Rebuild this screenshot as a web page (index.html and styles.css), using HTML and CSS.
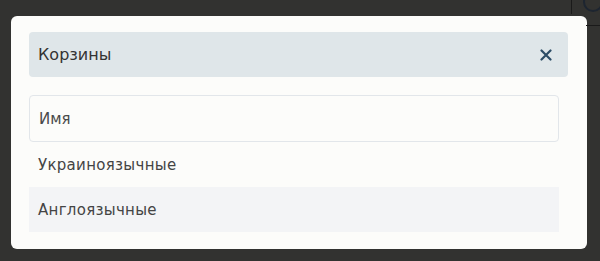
FILE: index.html
```html
<!DOCTYPE html>
<html lang="ru">
<head>
<meta charset="utf-8">
<link rel="stylesheet" href="styles.css">
</head>
<body>
<div class="backdrop-deco">
  <span class="deco-vline"></span>
  <span class="deco-ring"></span>
  <span class="deco-hline"></span>
</div>
<div class="modal">
  <div class="modal-header">
    <span class="modal-title">Корзины</span>
    <button class="close-btn" aria-label="Закрыть">
      <svg width="12" height="12" viewBox="0 0 12 12"><path d="M1.5 1.5 L10.5 10.5 M10.5 1.5 L1.5 10.5" stroke="#2c4c66" stroke-width="2.2" stroke-linecap="round"/></svg>
    </button>
  </div>
  <div class="modal-body">
    <div class="search-input">Имя</div>
    <ul class="list">
      <li class="list-item">Украиноязычные</li>
      <li class="list-item alt">Англоязычные</li>
    </ul>
  </div>
</div>
</body>
</html>
```
FILE: styles.css
```css
html, body {
  margin: 0;
  padding: 0;
}
body {
  width: 600px;
  height: 261px;
  background: #323230;
  font-family: "DejaVu Sans", "Noto Sans", sans-serif;
  color: #333;
  position: relative;
  overflow: hidden;
  padding: 16px 13px 0 11px;
  box-sizing: border-box;
}
.backdrop-deco {
  position: absolute;
  top: 0;
  right: 0;
  width: 30px;
  height: 30px;
}
.deco-vline {
  position: absolute;
  left: 1px;
  top: 0;
  width: 1px;
  height: 14px;
  background: #1a1a1a;
}
.deco-ring {
  position: absolute;
  left: 13px;
  top: -8px;
  width: 16px;
  height: 16px;
  border: 2px solid #1d2530;
  border-radius: 50%;
}
.deco-hline {
  position: absolute;
  left: 16px;
  top: 25px;
  width: 14px;
  height: 1px;
  background: #1a1a1a;
}
.modal {
  width: 576px;
  height: 233px;
  background: #fcfcfa;
  border-radius: 6px;
  padding: 16px 19px 0 18px;
  box-sizing: border-box;
}
.modal-header {
  height: 45px;
  background: #dfe6e9;
  border-radius: 4px;
  display: flex;
  align-items: center;
  justify-content: space-between;
  padding: 0 15px 0 9px;
}
.modal-title {
  font-size: 16px;
  color: #333;
}
.close-btn {
  border: 0;
  background: none;
  padding: 0;
  display: flex;
  width: 14px;
  height: 14px;
  align-items: center;
  justify-content: center;
}
.modal-body {
  padding: 18px 9px 0 0;
}
.search-input {
  height: 47px;
  box-sizing: border-box;
  border: 1px solid #e2e6ea;
  border-radius: 4px;
  display: flex;
  align-items: center;
  padding-left: 9px;
  font-size: 15px;
  color: #4a4a4a;
}
.list {
  list-style: none;
  margin: 0;
  padding: 0;
}
.list-item {
  height: 45px;
  display: flex;
  align-items: center;
  padding-left: 9px;
  font-size: 15px;
  letter-spacing: 0.3px;
  color: #444;
}
.list-item.alt {
  background: #f3f4f6;
}
```
